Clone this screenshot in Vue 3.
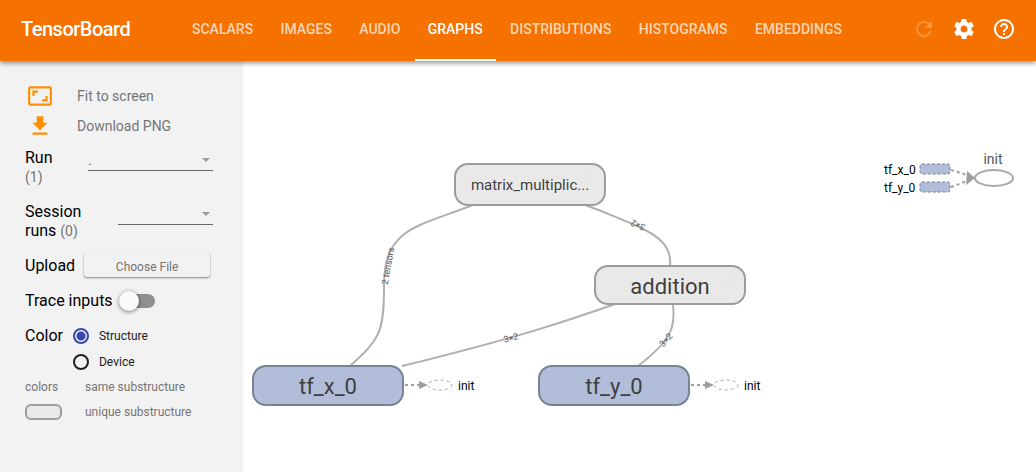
<script setup>
import { ref } from 'vue'

const tabs = ['Scalars', 'Images', 'Audio', 'Graphs', 'Distributions', 'Histograms', 'Embeddings']
const active = ref('Graphs')
const run = ref('.')
const session = ref('')
const trace = ref(false)
const colorBy = ref('structure')

const nodes = [
  { label: 'matrix_multiplic...', x: 455, y: 164, h: 41, cx: 530, base: 190, kind: 'unique', size: 'small' },
  { label: 'addition', x: 595, y: 266, h: 38, cx: 670, base: 294, kind: 'unique', size: 'large' },
  { label: 'tf_x_0', x: 253, y: 366, h: 39, cx: 328, base: 394, kind: 'same', size: 'large' },
  { label: 'tf_y_0', x: 539, y: 366, h: 39, cx: 614, base: 394, kind: 'same', size: 'large' }
]
const edges = [
  'M473 205C442 217 418 223 403 235C388 248 384 262 384 288C384 333 379 340 350 366',
  'M585 205C600 210 615 217 635 225C660 236 672 247 670 266',
  'M615 304C570 320 520 337 402 366',
  'M673 304C676 330 670 341 638 366'
]
const edgeLabels = [
  { text: '2 tensors', x: 388, y: 266, angle: -80 },
  { text: '3×2', x: 638, y: 225, angle: 202 },
  { text: '3×2', x: 511, y: 338, angle: -14 },
  { text: '3×2', x: 666, y: 340, angle: -48 }
]
const controls = [404, 690]
const inputs = [
  { label: 'tf_x_0', y: 169 },
  { label: 'tf_y_0', y: 187 }
]
</script>

<template>
  <div class="app">
    <header class="toolbar">
      <h1 class="title">TensorBoard</h1>
      <nav class="tabs">
        <button
          v-for="t in tabs"
          :key="t"
          type="button"
          class="tab"
          :class="{ active: t === active }"
          @click="active = t"
        >{{ t }}</button>
      </nav>
      <div class="actions">
        <button type="button" class="icon-button" aria-label="Reload" disabled>
          <svg viewBox="0 0 24 24"><path d="M17.65 6.35A7.96 7.96 0 0 0 12 4a8 8 0 1 0 7.73 10h-2.08A6 6 0 1 1 12 6c1.66 0 3.14.69 4.22 1.78L13 11h7V4l-2.35 2.35z" /></svg>
        </button>
        <button type="button" class="icon-button" aria-label="Settings">
          <svg viewBox="0 0 24 24"><path d="M19.43 12.98c.04-.32.07-.64.07-.98s-.03-.66-.07-.98l2.11-1.65c.19-.15.24-.42.12-.64l-2-3.46c-.12-.22-.39-.3-.61-.22l-2.49 1c-.52-.4-1.08-.73-1.69-.98l-.38-2.65C14.46 2.18 14.25 2 14 2h-4c-.25 0-.46.18-.49.42l-.38 2.65c-.61.25-1.17.59-1.69.98l-2.49-1c-.23-.09-.49 0-.61.22l-2 3.46c-.13.22-.07.49.12.64l2.11 1.65c-.04.32-.07.65-.07.98s.03.66.07.98l-2.11 1.65c-.19.15-.24.42-.12.64l2 3.46c.12.22.39.3.61.22l2.49-1c.52.4 1.08.73 1.69.98l.38 2.65c.03.24.24.42.49.42h4c.25 0 .46-.18.49-.42l.38-2.65c.61-.25 1.17-.59 1.69-.98l2.49 1c.23.09.49 0 .61-.22l2-3.46c.12-.22.07-.49-.12-.64l-2.11-1.65zM12 15.5c-1.93 0-3.5-1.57-3.5-3.5s1.57-3.5 3.5-3.5 3.5 1.57 3.5 3.5-1.57 3.5-3.5 3.5z" /></svg>
        </button>
        <button type="button" class="icon-button" aria-label="Help">
          <svg viewBox="0 0 24 24"><path d="M11 18h2v-2h-2v2zm1-16C6.48 2 2 6.48 2 12s4.48 10 10 10 10-4.48 10-10S17.52 2 12 2zm0 18c-4.41 0-8-3.59-8-8s3.59-8 8-8 8 3.59 8 8-3.59 8-8 8zm0-14c-2.21 0-4 1.79-4 4h2c0-1.1.9-2 2-2s2 .9 2 2c0 2-3 1.75-3 5h2c0-2.25 3-2.5 3-5 0-2.21-1.79-4-4-4z" /></svg>
        </button>
      </div>
    </header>

    <div class="body">
      <aside class="sidebar">
        <div class="tools">
          <button type="button" class="tool">
            <svg viewBox="0 0 24 24"><path d="M19 12h-2v3h-3v2h5v-5zM7 9h3V7H5v5h2V9zm14-6H3c-1.1 0-2 .9-2 2v14c0 1.1.9 2 2 2h18c1.1 0 2-.9 2-2V5c0-1.1-.9-2-2-2zm0 16.01H3V4.99h18v14.02z" /></svg>
            <span>Fit to screen</span>
          </button>
          <button type="button" class="tool">
            <svg viewBox="0 0 24 24"><path d="M19 9h-4V3H9v6H5l7 7 7-7zM5 18v2h14v-2H5z" /></svg>
            <span>Download PNG</span>
          </button>
        </div>

        <div class="row">
          <label class="name narrow" for="run">Run <span class="count">(1)</span></label>
          <span class="dropdown wide">
            <select id="run" v-model="run"><option value=".">.</option></select>
          </span>
        </div>
        <div class="row">
          <label class="name" for="session">Session runs <span class="count">(0)</span></label>
          <span class="dropdown">
            <select id="session" v-model="session"><option value=""></option></select>
          </span>
        </div>
        <div class="row">
          <span id="upload" class="caption">Upload</span>
          <button type="button" class="choose" aria-describedby="upload">Choose File</button>
        </div>
        <div class="row">
          <label class="caption" for="trace">Trace inputs</label>
          <input id="trace" v-model="trace" type="checkbox" class="toggle">
        </div>
        <div class="row color" role="radiogroup" aria-labelledby="color">
          <span id="color" class="caption">Color</span>
          <div class="choices">
            <label class="choice"><input v-model="colorBy" type="radio" name="color" value="structure">Structure</label>
            <label class="choice"><input v-model="colorBy" type="radio" name="color" value="device">Device</label>
          </div>
        </div>
        <div class="legend">
          <span>colors</span><span>same substructure</span>
          <span class="swatch"></span><span>unique substructure</span>
        </div>
      </aside>

      <main class="canvas">
        <svg class="graph" viewBox="243 61 793 411" role="img" aria-label="Main graph">
          <path v-for="d in edges" :key="d" class="edge" :d="d" />
          <text
            v-for="(l, i) in edgeLabels"
            :key="i"
            class="edge-label"
            dy="3"
            :transform="`translate(${l.x} ${l.y}) rotate(${l.angle})`"
          >{{ l.text }}</text>

          <g v-for="n in nodes" :key="n.label">
            <rect class="node" :class="n.kind" :x="n.x" :y="n.y" width="150" :height="n.h" rx="13" />
            <g class="expand" :class="n.kind" :transform="`translate(${n.x + 134} ${n.y + 15})`">
              <circle r="6" />
              <path d="M-3 0H3M0 -3V3" />
            </g>
            <text class="node-label" :class="n.size" :x="n.cx" :y="n.base">{{ n.label }}</text>
          </g>

          <g v-for="x in controls" :key="x" :transform="`translate(${x} 385)`">
            <path class="control" d="M1 0H16" />
            <path class="arrow" d="M15 -4L24 0L15 4Z" />
            <ellipse class="op dashed" cx="36" cy="0" rx="12" ry="5" />
            <text class="small-label" x="54" y="5">init</text>
          </g>

          <g v-for="n in inputs" :key="n.label">
            <text class="small-label" x="884" :y="n.y + 5">{{ n.label }}</text>
            <rect class="input-node" x="920" :y="n.y - 5" width="30" height="10" rx="2" />
          </g>
          <path class="control" d="M951 170L967 175M951 187L967 181" />
          <path class="arrow" d="M967 171L975 178L966 185Z" />
          <ellipse class="op" cx="994" cy="178" rx="19" ry="8" />
          <text class="init-label" x="993" y="164">init</text>
        </svg>
      </main>
    </div>
  </div>
</template>

<style>
body {
  margin: 0;
}
</style>

<style scoped>
.app {
  display: flex;
  flex-direction: column;
  min-height: 100vh;
  font-family: Roboto, sans-serif;
  background: #fff;
}
button {
  border: 0;
  padding: 0;
  background: none;
  font-family: inherit;
}
.toolbar {
  position: relative;
  z-index: 1;
  display: flex;
  align-items: center;
  height: 61px;
  background: #f57100;
  color: #fff;
  box-shadow: 0 2px 5px rgba(0, 0, 0, 0.45);
}
.title {
  margin: 0 0 4px 21px;
  width: 158px;
  font-size: 20px;
  line-height: 24px;
  font-weight: 500;
  letter-spacing: -0.025em;
}
.tabs {
  display: flex;
  justify-content: space-between;
  align-self: stretch;
  width: 676px;
}
.tab {
  padding: 0 13px 2px;
  border-bottom: 2px solid transparent;
  font-size: 14px;
  font-weight: 500;
  text-transform: uppercase;
  color: rgba(255, 255, 255, 0.72);
}
.tab.active {
  color: #fff;
  border-bottom-color: #fff;
}
.actions {
  display: flex;
  gap: 16px;
  margin: 0 20px 3px auto;
}
.icon-button svg {
  display: block;
  width: 24px;
  height: 24px;
  fill: #fff;
}
.icon-button:disabled {
  opacity: 0.25;
}
.body {
  display: flex;
  flex: 1;
}
.sidebar {
  box-sizing: border-box;
  flex: none;
  width: 243px;
  padding: 20px 30px 20px 25px;
  background: #f2f2f2;
}
.tools {
  margin-bottom: 7px;
}
.tool {
  display: flex;
  align-items: center;
  gap: 24px;
  height: 30px;
  padding: 0 2px;
  font-size: 14px;
  color: #757575;
}
.tool svg {
  width: 26px;
  height: 26px;
  fill: #ff8f00;
}
.row {
  display: flex;
  align-items: flex-start;
  margin-bottom: 16px;
  font-size: 16px;
  line-height: 19px;
  color: #000;
}
.name {
  width: 60px;
}
.name.narrow {
  width: 30px;
}
.count {
  font-size: 14px;
  line-height: 1;
  color: #757575;
}
.dropdown {
  position: relative;
  width: 95px;
  margin-left: auto;
}
.dropdown.wide {
  width: 125px;
}
.dropdown::after {
  content: '';
  position: absolute;
  right: 3px;
  top: 10px;
  border: 4px solid transparent;
  border-top-color: #9a9a9a;
  border-bottom: 0;
  pointer-events: none;
}
.dropdown select {
  display: block;
  width: 100%;
  height: 23px;
  padding: 2px 0 0;
  appearance: none;
  border: 0;
  border-bottom: 1px solid #666;
  border-radius: 0;
  background: none;
  font-family: inherit;
  font-size: 14px;
  color: #555;
}
.choose {
  width: 126px;
  height: 25px;
  margin: -4px 0 -2px 9px;
  padding-top: 4px;
  border-radius: 3px;
  background: #f2f2f2;
  box-shadow: 0 1px 2px rgba(0, 0, 0, 0.45);
  font-size: 12px;
  color: #757575;
}
.toggle {
  position: relative;
  appearance: none;
  width: 34px;
  height: 14px;
  margin: 3px 0 0 8px;
  border-radius: 7px;
  background: #8f8f8f;
}
.toggle::before {
  content: '';
  position: absolute;
  left: -2px;
  top: -3px;
  width: 20px;
  height: 20px;
  border-radius: 50%;
  background: #fafafa;
  box-shadow: 0 1px 4px rgba(0, 0, 0, 0.5);
}
.toggle:checked::before {
  left: 16px;
}
.color {
  margin-bottom: 7px;
}
.choices {
  display: grid;
  gap: 6px;
  margin-left: 10px;
}
.choice {
  display: flex;
  align-items: center;
  gap: 10px;
  height: 20px;
  font-size: 12px;
  color: #212121;
}
.choice input {
  appearance: none;
  box-sizing: border-box;
  width: 16px;
  height: 16px;
  margin: 0;
  border: 2px solid #212121;
  border-radius: 50%;
}
.choice input:checked {
  border-color: #3949ab;
  background: radial-gradient(circle, #3949ab 4px, transparent 5px);
}
.legend {
  display: grid;
  grid-template-columns: 60px 1fr;
  row-gap: 9px;
  align-items: center;
  font-size: 12px;
  line-height: 16px;
  color: #757575;
}
.swatch {
  box-sizing: border-box;
  width: 37px;
  height: 16px;
  border: 2px solid #9e9e9e;
  border-radius: 6px;
  background: #e9e9e9;
}
.canvas {
  flex: 1;
  min-width: 0;
}
.graph {
  display: block;
  width: 100%;
}
.edge {
  fill: none;
  stroke: #b0b0b0;
  stroke-width: 2;
}
.edge-label {
  font-size: 9px;
  text-anchor: middle;
  fill: #555;
}
.node {
  stroke-width: 2;
}
.node.unique {
  fill: #e9e9e9;
  stroke: #9c9c9c;
}
.node.same {
  fill: #b2bed9;
  stroke: #788292;
}
.expand {
  fill: none;
  stroke: #eae6e4;
  stroke-width: 1;
}
.expand.same {
  stroke: #b4bed8;
}
.node-label {
  text-anchor: middle;
  fill: #3f3f3f;
}
.node-label.small {
  font-size: 15px;
}
.node-label.large {
  font-size: 22px;
}
.control {
  fill: none;
  stroke: #9e9e9e;
  stroke-width: 2;
  stroke-dasharray: 3 3;
}
.arrow {
  fill: #9e9e9e;
}
.op {
  fill: #fff;
  stroke: #a8a8a8;
  stroke-width: 2;
}
.op.dashed {
  stroke-width: 1;
  stroke-dasharray: 3 3;
}
.input-node {
  fill: #b2bed9;
  stroke: #788292;
  stroke-width: 1;
  stroke-dasharray: 3 2;
}
.small-label {
  font-size: 12px;
  fill: #000;
}
.init-label {
  font-size: 14px;
  text-anchor: middle;
  fill: #555;
}
</style>
